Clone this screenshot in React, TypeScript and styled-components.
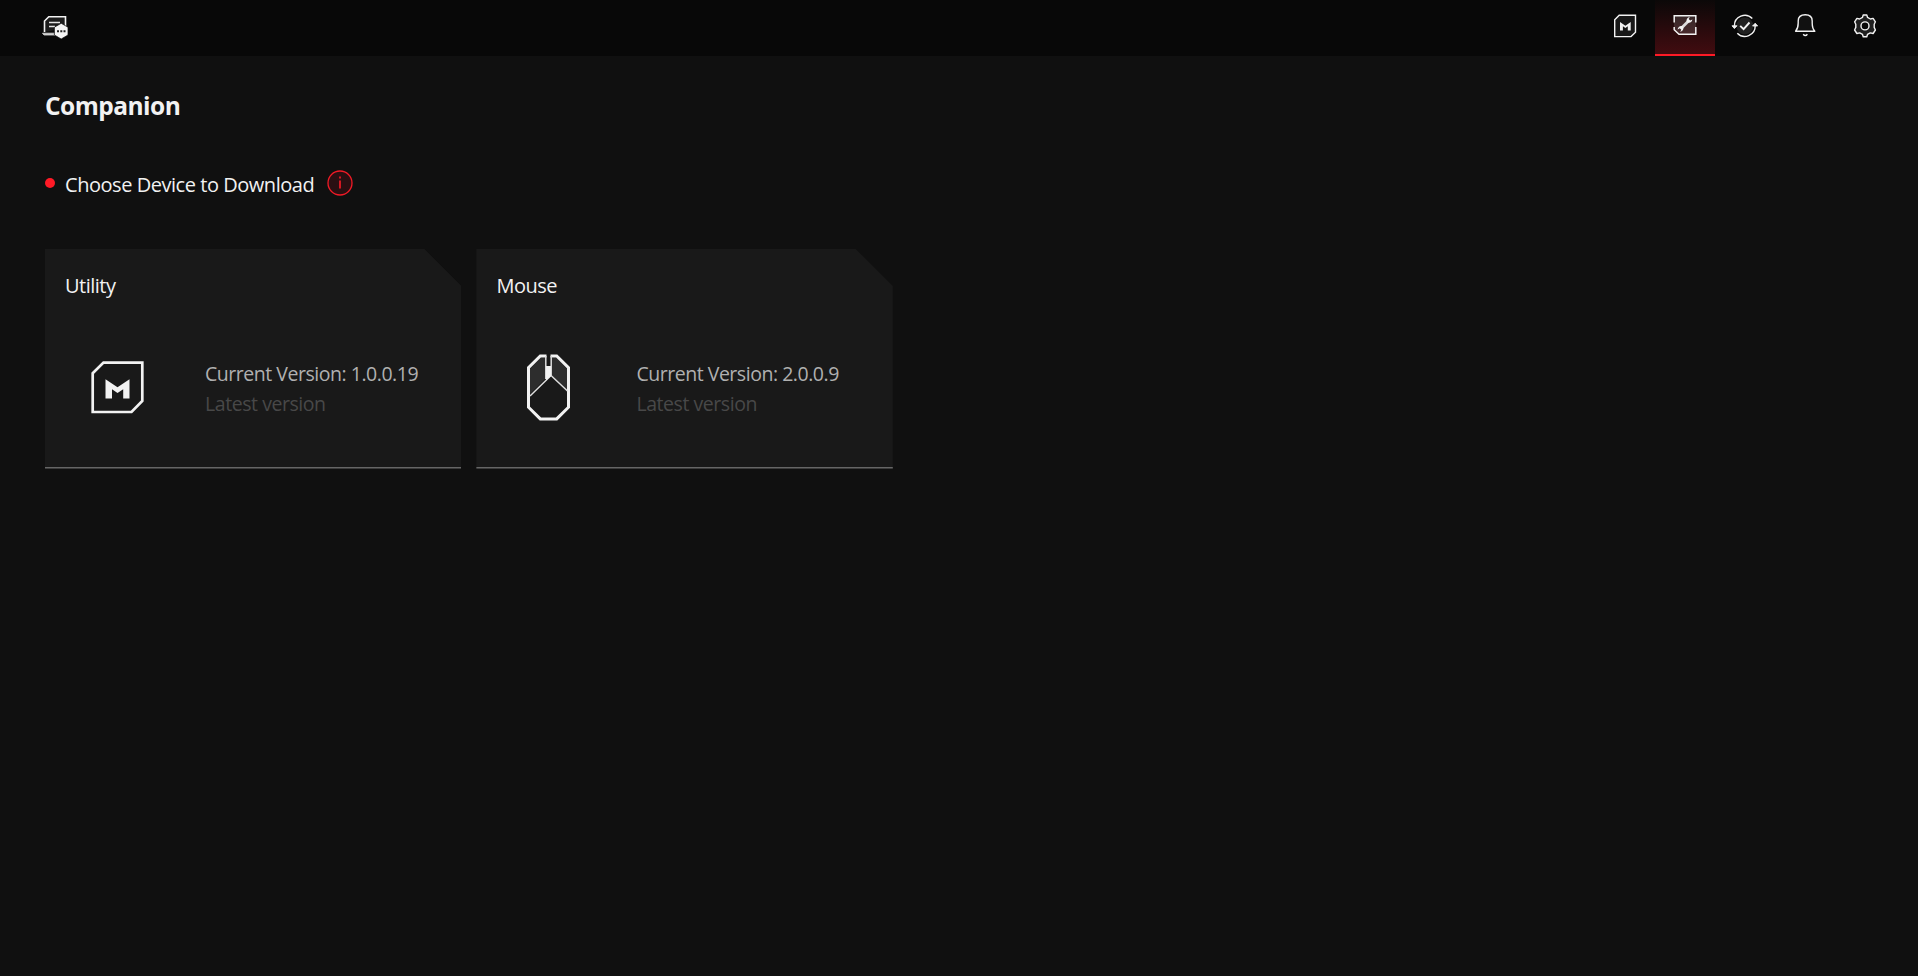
import React from "react";
import styled, { createGlobalStyle } from "styled-components";

const GlobalStyle = createGlobalStyle`
  * { box-sizing: border-box; }
  html, body { margin: 0; background: #101010; }
  body {
    color: #f2f2f2;
    font-family: "Segoe UI", "Open Sans", "Noto Sans", sans-serif;
    font-size: 20px;
    line-height: 30px;
  }
`;

const Page = styled.div`
  min-height: 100vh;
  background: #101010;
  white-space: nowrap;
`;

const TopBar = styled.header`
  display: flex;
  justify-content: space-between;
  height: 56px;
  padding: 0 23px 0 39px;
  background: #080808;
`;

const LogoButton = styled.button`
  display: flex;
  padding: 10px 0 0;
  border: 0;
  background: none;
`;

const Nav = styled.nav`
  display: flex;
`;

const NavButton = styled.button<{ $active?: boolean }>`
  display: flex;
  justify-content: center;
  width: 60px;
  height: 56px;
  padding: 10px 0 0;
  border: 0;
  border-bottom: 2px solid ${(p) => (p.$active ? "#ff1a26" : "transparent")};
  background: ${(p) => (p.$active ? "linear-gradient(#0b0808, #420c10)" : "none")};
`;

const Main = styled.main`
  padding: 33px 45px;
`;

const Title = styled.h1`
  margin: 0;
  font-size: 24.5px;
  font-weight: 700;
  line-height: 34px;
  letter-spacing: -0.52px;
`;

const Prompt = styled.div`
  display: flex;
  align-items: center;
  height: 30px;
  margin-top: 47px;
`;

const Dot = styled.span`
  width: 10px;
  height: 10px;
  margin: -4px 10px 0 0;
  border-radius: 50%;
  background: #ff1a26;
`;

const PromptText = styled.span`
  width: 262px;
  letter-spacing: -0.46px;
`;

const InfoIcon = styled.svg`
  margin-top: -4px;
`;

const Cards = styled.section`
  display: flex;
  gap: 15px;
  margin-top: 49px;
`;

const Card = styled.article`
  width: 416.4px;
  height: 220px;
  padding: 22px 20px 0;
  background: linear-gradient(#666, #666) 0 218px / 100% 1px no-repeat,
    linear-gradient(#3c3c3c, #3c3c3c) 0 219px / 100% 1px no-repeat, #191919;
  clip-path: polygon(0 0, calc(100% - 37px) 0, 100% 37px, 100% 100%, 0 100%);
`;

const CardTitle = styled.h2`
  margin: 0;
  font-size: 20px;
  font-weight: 400;
  letter-spacing: -0.5px;
`;

const CardBody = styled.div`
  display: flex;
  gap: 54px;
  margin-top: 58px;
`;

const DeviceIcon = styled.svg`
  flex: none;
  margin: -5px 0 0 16px;
`;

const Version = styled.div`
  color: #b0b0b0;
  font-size: 19.5px;
  letter-spacing: -0.47px;
`;

const Status = styled.div`
  color: #484848;
  font-size: 19.5px;
  letter-spacing: -0.44px;
`;

const line = { fill: "none", stroke: "#f2f2f2", strokeWidth: 1.4 } as const;

const LogoIcon = () => (
  <svg width="32" height="32" viewBox="0 0 32 32">
    <path d="M5.500 22V11L9.800 6.800H26.500V18" fill="#1c1c1c" stroke="#f2f2f2" strokeWidth="1.6" />
    <path d="M3.500 23.200H15.500L16.500 25H5Z" fill="#c8c8c8" stroke="#ddd" strokeWidth=".8" />
    <path d="M10 12.600H21M10 16.500H16" stroke="#e6e6e6" strokeWidth="1.5" />
    <path d="M22.200 13.300L29 17.200V25L22.200 29L15.400 25V17.200Z" fill="#f5f5f5" stroke="#080808" strokeWidth=".7" />
    <path d="M18 20.300h2v2h-2zM21.300 20.300h2v2h-2zM24.500 20.300h2v2h-2z" fill="#222" />
  </svg>
);

const UtilityNavIcon = () => (
  <svg width="32" height="32" viewBox="0 0 32 32">
    <path d="M5.700 9.700L10.200 5.200H26.500V22.300L22 26.600H5.700Z" {...line} fill="#181818" />
    <path d="M11 20.500V12L16.400 15.800L21.700 12V20.500H18.800V16.300L16.400 18L13.900 16.300V20.500Z" fill="#f2f2f2" />
  </svg>
);

const ToolIcon = () => (
  <svg width="32" height="32" viewBox="0 0 32 32">
    <path d="M5 5.500H27V24.300H10L5 19.500Z" fill="#fff" fillOpacity=".13" />
    <path d="M5.200 12.500V5.700H26.800V12.500M26.800 17V24.300H10L5.200 19.700V17" {...line} strokeWidth="1.5" />
    <path d="M12 18.400L20 10.400" stroke="#dcdcdc" strokeWidth="2.8" />
    <path d="M20.800 6.900C18.100 7.400 16.900 9.900 18 12.200C20.300 13.500 22.900 12.200 23.400 9.400L21.200 10.600L19.700 9.100Z" fill="#f2f2f2" />
    <path d="M11.200 21.900C13.900 21.400 15.100 18.900 14 16.600C11.700 15.300 9.100 16.600 8.600 19.400L10.800 18.200L12.300 19.700Z" fill="#f2f2f2" />
  </svg>
);

const SyncIcon = () => (
  <svg width="32" height="32" viewBox="0 0 32 32">
    <circle cx="15.800" cy="15.900" r="8.500" fill="#202020" />
    <path d="M5.400 16A10.400 10.400 0 0 1 23.300 8.600M26.200 15.800A10.400 10.400 0 0 1 8.300 23.200" {...line} />
    <path d="M3 15.800L5.400 18.600L8 15.800ZM23.600 16L26.200 13.200L28.600 16Z" {...line} fill="#f2f2f2" strokeWidth=".9" />
    <path d="M11.200 15.800L14.600 19.200L20.500 12.500" {...line} strokeWidth="1.9" />
  </svg>
);

const BellIcon = () => (
  <svg width="32" height="32" viewBox="0 0 32 32">
    <path d="M6.600 21.300C8.800 18.800 9.200 17.500 9.200 13V11C9.200 7.100 12 4.800 16.300 4.800S23.200 7.100 23.200 11V13C23.200 17.500 23.500 18.800 25.800 21.300Z" {...line} fill="#111" strokeLinejoin="round" />
    <path d="M14.200 24.200Q16.300 26.700 18.400 24.200" {...line} />
  </svg>
);

const GearIcon = () => (
  <svg width="32" height="32" viewBox="0 0 32 32">
    <path
      d="M14.200 5H17.800L18.500 7.400L21.400 9L24.100 8.400L26.400 11.800L25.200 14.200V17.400L26.400 20L24.100 23.500L21.300 22.900L18.500 24.400L17.800 26.800H14.200L13.500 24.400L10.700 22.900L7.900 23.500L5.600 20L6.800 17.400V14.200L5.600 11.800L7.900 8.400L10.600 9L13.500 7.400Z"
      {...line}
      fill="#202020"
      strokeLinejoin="round"
    />
    <circle cx="16" cy="15.900" r="4" {...line} fill="#080808" />
  </svg>
);

const UtilityIcon = () => (
  <DeviceIcon width="70" height="72" viewBox="0 0 70 72">
    <path d="M11.700 19.300L22.500 8.600H61.300V47L50.500 58H11.700Z" fill="none" stroke="#f2f2f2" strokeWidth="2.700" />
    <path d="M24.500 44.500V25.300L36.500 33.300L48.500 25.300V44.500H42.200V35.300L36.500 39.100L31 35.300V44.500Z" fill="#f2f2f2" />
  </DeviceIcon>
);

const MouseIcon = () => (
  <DeviceIcon width="70" height="72" viewBox="0 0 70 72">
    <path d="M18 40V15L28.500 4H34V24ZM39 4H44.500L55 15V36L39 21Z" fill="#2d2d2d" />
    <path d="M34.500 1.900H28.300L16.500 13.700V53.200L28.300 64.900H44.700L56.500 53.200V13.700L44.700 1.900H38.500" fill="none" stroke="#f2f2f2" strokeWidth="3" />
    <path d="M18 42L39 21.500L55.500 37M33.800 2V25M39.200 2V22" fill="none" stroke="#ddd" strokeWidth="1.5" />
    <path d="M34 12H39V22L34 26.500Z" fill="#f2f2f2" />
  </DeviceIcon>
);

const navItems = [
  { label: "Home", Icon: UtilityNavIcon },
  { label: "Companion", Icon: ToolIcon, active: true },
  { label: "Updates", Icon: SyncIcon },
  { label: "Notifications", Icon: BellIcon },
  { label: "Settings", Icon: GearIcon },
];

const devices = [
  { name: "Utility", version: "1.0.0.19", Icon: UtilityIcon },
  { name: "Mouse", version: "2.0.0.9", Icon: MouseIcon },
];

export default function App() {
  return (
    <Page>
      <GlobalStyle />
      <TopBar>
        <LogoButton>
          <LogoIcon />
        </LogoButton>
        <Nav>
          {navItems.map(({ label, Icon, active }) => (
            <NavButton key={label} $active={active}>
              <Icon />
            </NavButton>
          ))}
        </Nav>
      </TopBar>
      <Main>
        <Title>Companion</Title>
        <Prompt>
          <Dot />
          <PromptText>Choose Device to Download</PromptText>
          <InfoIcon width="26" height="26" viewBox="0 0 26 26">
            <circle cx="13" cy="13" r="12" fill="#2a0f12" stroke="#f01a26" strokeWidth="1.3" />
            <path d="M13 10.500V18.500M13 6.500V8.500" stroke="#ff1a26" strokeWidth="1.6" />
          </InfoIcon>
        </Prompt>
        <Cards>
          {devices.map(({ name, version, Icon }) => (
            <Card key={name}>
              <CardTitle>{name}</CardTitle>
              <CardBody>
                <Icon />
                <div>
                  <Version>Current Version: {version}</Version>
                  <Status>Latest version</Status>
                </div>
              </CardBody>
            </Card>
          ))}
        </Cards>
      </Main>
    </Page>
  );
}
